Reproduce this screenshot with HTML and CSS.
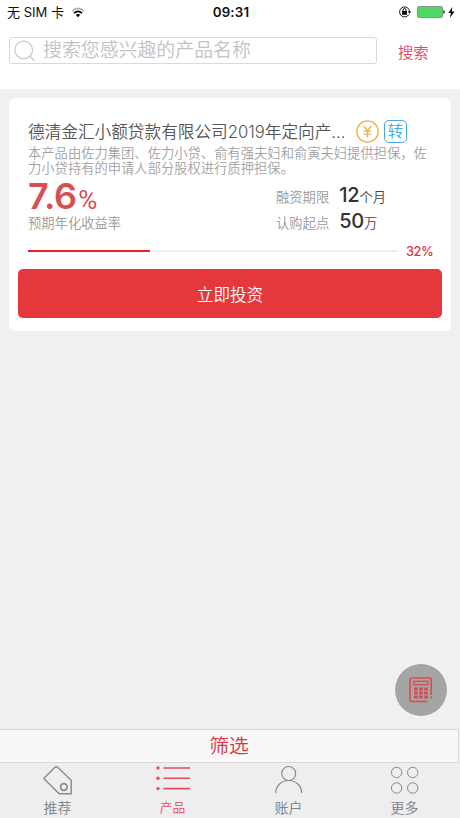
FILE: index.html
```html
<!DOCTYPE html>
<html lang="zh-CN">
<head>
<meta charset="utf-8">
<meta name="viewport" content="width=device-width, initial-scale=1">
<title>产品</title>
<link rel="stylesheet" href="styles.css">
</head>
<body>
<div class="app">
  <header class="header">
    <div class="status">
      <div class="status-left"><span>无 SIM 卡</span>
        <svg width="14" height="11" viewBox="0 0 14 11" fill="none"><path d="M1 4Q7-1.3 13 4" stroke="#aaa" stroke-width="1.5"/><path d="M3 6.2Q7 2.6 11 6.2" stroke="#000" stroke-width="1.6"/><path d="M4.8 7.8Q7 6 9.2 7.8L7 10.2Z" fill="#000"/></svg>
      </div>
      <div class="status-time">09:31</div>
      <div class="status-right">
        <svg width="14" height="12" viewBox="0 0 14 12" fill="none" stroke="#111"><path d="M10.9 8.5A5 5 0 1 1 11 3.5"/><path d="M11.2 3.5v3" /><path d="M9.8 5.6h3.4L11.5 7.7Z" fill="#111" stroke="none"/><rect x="4" y="5" width="5" height="3.8" fill="#111" stroke="none"/><path d="M5 5.2V4a1.5 1.5 0 0 1 3 0v1.2"/></svg>
        <svg class="battery" width="28" height="12" viewBox="0 0 28 12"><rect x=".5" y=".5" width="25" height="11" rx="1.5" fill="#4cd964" stroke="#8b938b"/><path d="M26.4 4v4q1.4-.5 1.4-2t-1.4-2" fill="#111"/></svg>
        <svg width="7" height="11" viewBox="0 0 7 11"><path d="M4.3 0 .4 6h2.5L1.9 11 6.6 4.5H4Z" fill="#111"/></svg>
      </div>
    </div>
    <div class="search">
      <div class="search-box">
        <svg width="22" height="22" viewBox="0 0 22 22" fill="none" stroke="#c9c9ce" stroke-width="1.2"><circle cx="9.7" cy="10" r="8.8"/><path d="m16 16.3 4.8 4.7"/></svg>
        <span>搜索您感兴趣的产品名称</span>
      </div>
      <a class="search-action">搜索</a>
    </div>
  </header>

  <main class="main">
    <section class="card">
      <div class="card-body">
        <div class="title-row">
          <h1 class="title">德清金汇小额贷款有限公司2019年定向产...</h1>
          <svg class="coin" width="23" height="23" viewBox="0 0 23 23" fill="none" stroke="#efb13f" stroke-width="1.3"><circle cx="11.5" cy="11.5" r="10.7"/><path d="m7.8 5.8 3.7 5.2 3.7-5.2M11.5 11v6.6M7.8 11.2h7.4M7.8 14.2h7.4"/></svg>
          <span class="transfer">转</span>
        </div>
        <p class="desc">本产品由佐力集团、佐力小贷、俞有强夫妇和俞寅夫妇提供担保，佐力小贷持有的申请人部分股权进行质押担保。</p>
        <div class="stats">
          <div class="yield">
            <div class="rate">7.6<span class="pct">%</span></div>
            <div class="label">预期年化收益率</div>
          </div>
          <div class="terms">
            <div class="term"><span class="label">融资期限</span><b>12</b><span class="unit">个月</span></div>
            <div class="term"><span class="label">认购起点</span><b>50</b><span class="unit">万</span></div>
          </div>
        </div>
        <div class="progress"><div class="track"><div class="fill" style="width:33%"></div></div><span>32%</span></div>
      </div>
      <button class="invest">立即投资</button>
    </section>
    <div class="calc">
      <svg width="24" height="26" viewBox="0 0 24 26" fill="none" stroke="#dc4850" stroke-width="1.6"><path d="M22.2 18V3q0-2-2-2H3Q1 1 1 3v19.500q0 2 2 2h15.500M22.200 19.500v2"/><rect x="4.800" y="4.300" width="14" height="3.400" stroke-width="1.300"/><path d="M5 12h14M5 16h14M5 20h14" stroke-width="2.800" stroke-dasharray="3.600 1.500"/></svg>
    </div>
  </main>

  <div class="filter">筛选</div>
  <nav class="tabs">
    <a class="tab">
      <svg width="36" height="32" viewBox="0 0 36 32" fill="none" stroke="#868b90" stroke-width="1.400"><path d="M4.200 15 15.200 4.100Q16.200 3.200 17.300 4.100L31.200 17.200V30.800H19.200L4.200 16Q3.700 15.500 4.200 15Z"/><circle cx="23.800" cy="24" r="3.300" stroke-width="1.700"/></svg>
      <span>推荐</span>
    </a>
    <a class="tab active">
      <svg width="36" height="32" viewBox="0 0 36 32" fill="#e64c60"><circle cx="3" cy="5" r="1.700"/><circle cx="3" cy="15.300" r="1.700"/><circle cx="3" cy="25.600" r="1.700"/><path d="M8.500 4.200H35v1.600H8.500ZM8.500 14.500H35v1.600H8.500ZM8.500 24.800H35v1.600H8.500Z"/></svg>
      <span>产品</span>
    </a>
    <a class="tab">
      <svg width="36" height="32" viewBox="0 0 36 32" fill="none" stroke="#868b90" stroke-width="1.200"><circle cx="17.700" cy="10.500" r="7"/><path d="M4.800 30C4.800 22.500 10.600 17.500 17.700 17.500S30.600 22.500 30.600 30"/></svg>
      <span>账户</span>
    </a>
    <a class="tab">
      <svg width="36" height="32" viewBox="0 0 36 32" fill="none" stroke="#868b90"><circle cx="9.600" cy="9.500" r="5.200"/><circle cx="25.700" cy="9.500" r="5.200"/><circle cx="9.600" cy="25" r="5.200"/><circle cx="25.700" cy="25" r="5.200"/></svg>
      <span>更多</span>
    </a>
  </nav>
</div>
</body>
</html>
```
FILE: styles.css
```css
* { box-sizing: border-box; }
body { margin: 0; font-family: Inter, "Noto Sans CJK SC", sans-serif; font-weight: 350; }
.app { width: 460px; height: 818px; display: flex; flex-direction: column; background: #f0f0f0; overflow: hidden; }
svg { display: block; flex: none; }

.header { height: 89px; background: #fff; flex: none; }
.status { height: 24px; display: grid; grid-template-columns: 1fr auto 1fr; align-items: center; padding: 0 5px 0 7px; color: #111; }
.status-left { display: flex; align-items: center; gap: 7px; font-size: 13px; font-weight: 400; line-height: 20px; }
.status-time { font-size: 13.300px; font-weight: 600; letter-spacing: .2px; }
.status-right { display: flex; align-items: center; justify-content: flex-end; gap: 3px; }
.battery { margin-left: 2px; }
.search { display: flex; padding: 13px 0 0 9px; }
.search-box { width: 368px; height: 27px; border: 1px solid #d9d9dc; border-radius: 3px; display: flex; align-items: center; gap: 7px; padding-left: 4px; color: #c2c2c8; font-size: 18.900px; line-height: 24px; white-space: nowrap; }
.search-box span { margin-top: 1px; }
.search-action { margin: 5px 0 0 21px; font-size: 15.300px; line-height: 22px; color: #e4455c; }

.main { flex: 1; padding: 9px 9px 0; position: relative; }
.card { height: 233px; background: #fff; border-radius: 6px; padding: 21px 9px 0; }
.card-body { padding: 0 10px; height: 150px; }
.title-row { height: 25px; display: flex; align-items: center; }
.title { margin: 1px 0 0; width: 328px; font-size: 16.650px; line-height: 25px; font-weight: 350; color: #555; white-space: nowrap; }
.transfer { width: 23px; height: 23px; margin-left: 5px; border: 1.300px solid #45a9e6; border-radius: 5px; color: #45a9e6; font-size: 15.500px; line-height: 22px; text-align: center; }
.desc { margin: 2px -5px 0 0; width: 402px; font-size: 13.300px; line-height: 15.300px; color: #a2a2a2; }
.stats { display: flex; height: 57px; }
.yield { width: 248px; }
.rate { height: 37px; line-height: 39px; font-size: 36px; font-weight: 600; letter-spacing: -.3px; color: #d94f4f; white-space: nowrap; }
.pct { margin-left: 1.500px; font-family: Roboto, sans-serif; font-size: 26px; line-height: 26px; font-weight: 400; letter-spacing: 0; }
.label { font-size: 13.300px; line-height: 17px; color: #999; }
.yield .label { padding-top: 1px; }
.terms { padding-top: 6px; }
.term { height: 26px; display: flex; align-items: baseline; line-height: 24px; }
.term b { margin-left: 10px; font-size: 20px; font-weight: 500; letter-spacing: -.2px; color: #333; }
.unit { font-size: 13.300px; color: #444; }
.progress { display: flex; align-items: center; height: 20px; margin-top: 7px; gap: 8px; }
.track { width: 370px; flex: none; height: 2px; background: #eee; }
.fill { height: 2px; background: #e8202e; }
.progress span { margin-top: 1px; font-size: 12.800px; font-weight: 500; letter-spacing: -.4px; color: #dc3344; }
.invest { display: block; width: 424px; height: 49px; border: 0; border-radius: 5px; background: #e4383c; color: #fff; font: inherit; font-size: 16.600px; padding: 0; }

.calc { position: absolute; left: 394px; top: 574px; width: 54px; height: 54px; border-radius: 50%; background: #a5a5a5; border: 1px solid #fafafa; display: flex; align-items: center; justify-content: center; }
.filter { width: 459px; height: 34px; flex: none; border: 1px solid #d9d9d9; border-left: 0; background: #f8f8f8; color: #d93540; font-size: 19.800px; line-height: 33px; text-align: center; }
.tabs { height: 55px; flex: none; display: grid; grid-template-columns: 115px 115px 117px 115px; background: #eee; }
.tab { display: flex; flex-direction: column; align-items: center; color: #7b8086; font-size: 14px; line-height: 20px; }
.tab span { margin-top: 3px; }
.tab.active { color: #e64c60; font-size: 12.800px; }
```
